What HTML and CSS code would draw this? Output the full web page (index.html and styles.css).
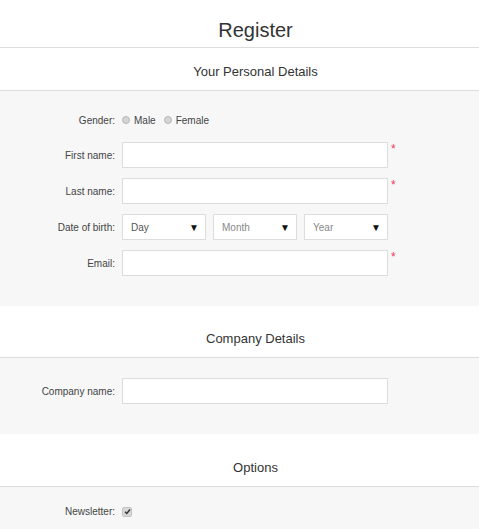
FILE: index.html
```html
<!DOCTYPE html>
<html>
<head>
<meta charset="utf-8">
<link rel="stylesheet" href="styles.css">
</head>
<body>
<h1 class="page-title">Register</h1>

<section class="fieldset first">
  <h2 class="legend">Your Personal Details</h2>
  <div class="fields">
    <div class="row row-gender">
      <span class="label">Gender:</span>
      <div class="radios">
        <label class="radio-opt"><span class="radio"></span>Male</label>
        <label class="radio-opt"><span class="radio"></span>Female</label>
      </div>
    </div>
    <div class="row">
      <span class="label">First name:</span>
      <div class="input"></div>
      <span class="req">*</span>
    </div>
    <div class="row">
      <span class="label">Last name:</span>
      <div class="input"></div>
      <span class="req">*</span>
    </div>
    <div class="row">
      <span class="label">Date of birth:</span>
      <div class="selects">
        <div class="select dark"><span>Day</span><span class="arrow">▼</span></div>
        <div class="select"><span>Month</span><span class="arrow">▼</span></div>
        <div class="select"><span>Year</span><span class="arrow">▼</span></div>
      </div>
    </div>
    <div class="row">
      <span class="label">Email:</span>
      <div class="input"></div>
      <span class="req">*</span>
    </div>
  </div>
</section>

<section class="fieldset">
  <h2 class="legend">Company Details</h2>
  <div class="fields">
    <div class="row">
      <span class="label">Company name:</span>
      <div class="input"></div>
    </div>
  </div>
</section>

<section class="fieldset last">
  <h2 class="legend">Options</h2>
  <div class="fields">
    <div class="row row-check">
      <span class="label">Newsletter:</span>
      <span class="checkbox"><svg width="7" height="7" viewBox="0 0 7 7"><path d="M1 3.8 L2.8 5.5 L6 1.5" fill="none" stroke="#333" stroke-width="1.4"/></svg></span>
    </div>
  </div>
</section>
</body>
</html>
```

FILE: styles.css
```css
html, body {
  margin: 0;
  padding: 0;
  background: #fff;
  font-family: "Liberation Sans", Arial, sans-serif;
  color: #444;
}

.page-title {
  margin: 0;
  padding: 18px 0 5px 32px;
  line-height: 24px;
  font-size: 20px;
  font-weight: normal;
  color: #333;
  text-align: center;
  border-bottom: 1px solid #ddd;
}

.fieldset {
  margin-top: 9px;
}

.fieldset.first {
  margin-top: 0;
}

.fieldset.last {
  margin-top: 10px;
}

.legend {
  margin: 0;
  padding: 15px 0 9px 32px;
  line-height: 18px;
  font-size: 13px;
  font-weight: normal;
  color: #333;
  text-align: center;
  border-bottom: 1px solid #ddd;
}

.fields {
  background: #f7f7f7;
  padding: 20px 0 30px;
  display: flex;
  flex-direction: column;
  gap: 10px;
}

.fieldset.first .fields {
  padding-top: 19px;
}

.row {
  display: flex;
  align-items: center;
  gap: 7px;
}

.row-gender {
  height: 20px;
  margin-bottom: 2px;
}

.row-check {
  height: 9px;
}

.label {
  width: 115px;
  text-align: right;
  font-size: 10px;
  color: #444;
}

.input {
  width: 264px;
  height: 24px;
  background: #fff;
  border: 1px solid #ddd;
}

.req {
  align-self: flex-start;
  margin-left: -4px;
  margin-top: 1px;
  color: #e8415c;
  font-size: 12px;
  line-height: 12px;
}

.radios {
  display: flex;
  gap: 8px;
  font-size: 10px;
  color: #444;
}

.radio-opt {
  display: flex;
  align-items: center;
  gap: 4px;
}

.radio {
  width: 6px;
  height: 6px;
  border-radius: 50%;
  background: #d4d4d4;
  border: 1px solid #b9b9b9;
}

.selects {
  display: flex;
  gap: 7px;
}

.select {
  height: 24px;
  background: #fff;
  border: 1px solid #ddd;
  display: flex;
  align-items: center;
  justify-content: space-between;
  padding: 0 0 0 8px;
  box-sizing: content-box;
  width: 74px;
  font-size: 10px;
  color: #888;
}

.select.dark {
  color: #555;
}

.select .arrow {
  color: #111;
  font-size: 10px;
  margin-right: 6px;
}

.checkbox {
  width: 8px;
  height: 8px;
  border: 1px solid #c4c4c4;
  background: #d8d8d8;
  border-radius: 2px;
  display: flex;
  align-items: center;
  justify-content: center;
}
```
